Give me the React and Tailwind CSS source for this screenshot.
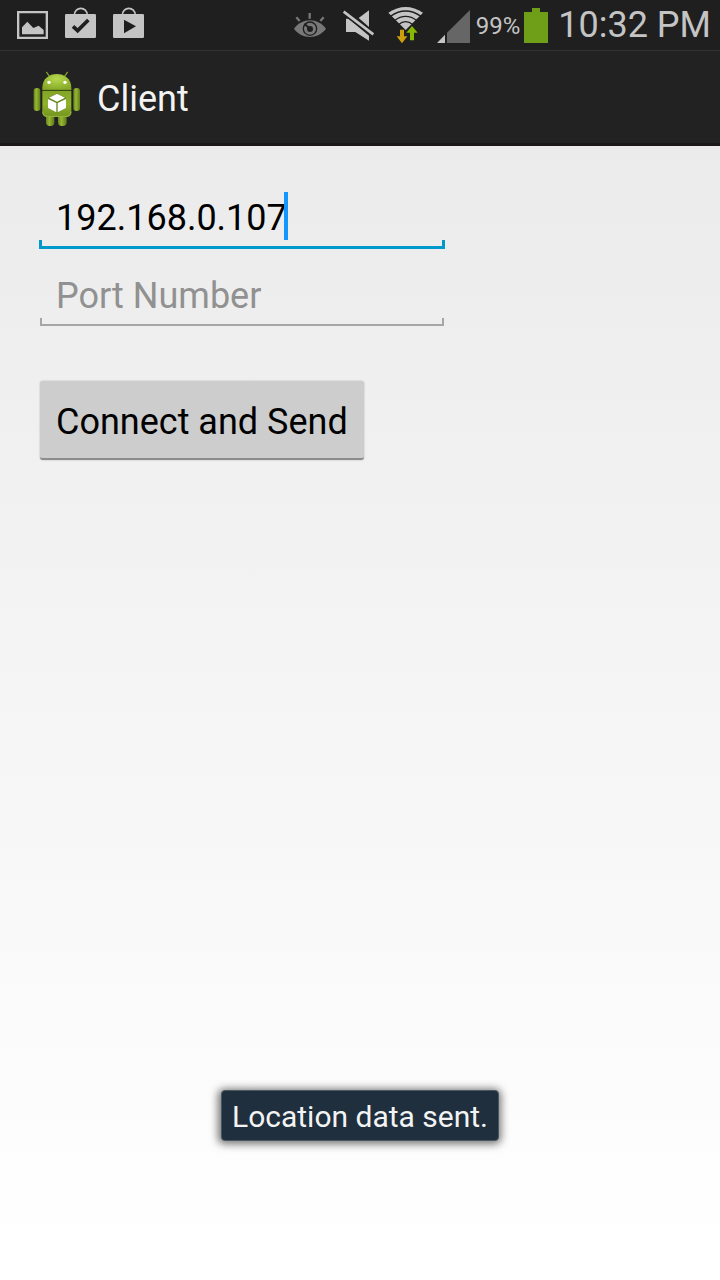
import React, { useState } from "react";

function StatusIcon({ viewBox, width = "w-12", label, children }) {
  return (
    <svg viewBox={viewBox} className={`${width} h-[50px] shrink-0`} role="img" aria-label={label}>
      {children}
    </svg>
  );
}

function StatusBar() {
  return (
    <div className="flex h-[51px] items-start justify-between border-b border-[#323232] bg-[#1f1f1f] pl-2 pr-[9px] text-[#c4c4c4]">
      <div className="flex">
        <StatusIcon viewBox="24 0 144 150" label="Screenshot saved">
          <path d="M51 33H144V117H51ZM58 40V110H137V40Z" fill="#c4c4c4" fillRule="evenodd" />
          <path d="M66 103V82L82 65L100 84L116 77L131 90V103Z" fill="#c4c4c4" />
        </StatusIcon>
        <StatusIcon viewBox="168 0 144 150" label="App updated">
          <path d="M223 46C223 18 262 18 262 46" fill="none" stroke="#c4c4c4" strokeWidth="5" />
          <rect x="195" y="42" width="93" height="72" rx="4" fill="#c4c4c4" />
          <path d="M219 79L233 92L265 60" fill="none" stroke="#1f1f1f" strokeWidth="11" />
        </StatusIcon>
        <StatusIcon viewBox="312 0 144 150" label="Play Store">
          <path d="M367 46C367 18 406 18 406 46" fill="none" stroke="#c4c4c4" strokeWidth="5" />
          <rect x="339" y="42" width="93" height="72" rx="4" fill="#c4c4c4" />
          <path d="M372 59L408 79L372 100Z" fill="#1f1f1f" />
        </StatusIcon>
      </div>
      <div className="flex items-center">
        <StatusIcon viewBox="3 0 144 150" label="Smart stay">
          <path d="M27 86C50 52 99 52 123 86C99 119 50 119 27 86Z" fill="#787878" />
          <circle cx="75" cy="86" r="20" fill="none" stroke="#1f1f1f" strokeWidth="4" />
          <circle cx="75" cy="87" r="9" fill="#1f1f1f" />
          <path d="M58 71L75 86" stroke="#1f1f1f" strokeWidth="6" />
          <path d="M34 52L44 63M74 39V56M116 52L106 63" stroke="#787878" strokeWidth="7" />
        </StatusIcon>
        <StatusIcon viewBox="147 0 144 150" label="Sound off">
          <path d="M183 56H191L252 107V122L211 96H183Z" fill="#c4c4c4" />
          <path d="M252 31V81L221 54Z" fill="#c4c4c4" />
          <path d="M176 35L265 103" stroke="#1f1f1f" strokeWidth="17" />
          <path d="M176 35L265 103" stroke="#c4c4c4" strokeWidth="8" />
        </StatusIcon>
        <StatusIcon viewBox="291 0 144 150" label="Wi-Fi">
          <path d="M362 90L310 38Q362 4 414 38Z" fill="#c4c4c4" />
          <path d="M316 49Q362 17 408 49M328 62Q362 36 396 62M340 74Q362 56 384 74" fill="none" stroke="#1f1f1f" strokeWidth="4" />
          <path d="M345 89H357V109H367L351 130L335 109H345Z" fill="#cc9f0c" />
          <path d="M364 98L381 76L398 98L390 101V123H373V101Z" fill="#1f1f1f" />
          <path d="M375 121H387V98H398L381 78L364 98H375Z" fill="#86b900" />
        </StatusIcon>
        <StatusIcon viewBox="15 0 120 150" width="w-10" label="Signal strength">
          <path d="M135 30V129H66V98Z" fill="#666666" />
          <path d="M60 104V129H36Z" fill="#c4c4c4" />
        </StatusIcon>
        <span className="pl-1.5 pr-1 pt-0.5 text-[24px] leading-[48px]">99%</span>
        <StatusIcon viewBox="297 0 72 150" width="w-6" label="Battery">
          <path d="M321 24H345V36H369V129H297V36H321Z" fill="#6f9e18" />
        </StatusIcon>
        <time className="pl-2.5 text-[36px] leading-[50px]">10:32 PM</time>
      </div>
    </div>
  );
}

function AndroidLogo() {
  return (
    <svg viewBox="39 30 144 168" className="h-14 w-12 shrink-0" aria-hidden="true">
      <defs>
        <linearGradient id="bodyGreen" x1="0" y1="0" x2="0" y2="1">
          <stop offset="0" stopColor="#82a527" />
          <stop offset="0.5" stopColor="#8fb32b" />
          <stop offset="1" stopColor="#72931f" />
        </linearGradient>
        <linearGradient id="limbGreen" x1="0" y1="0" x2="1" y2="0">
          <stop offset="0" stopColor="#67851c" />
          <stop offset="0.4" stopColor="#96b733" />
          <stop offset="1" stopColor="#5d7a18" />
        </linearGradient>
        <radialGradient id="headGreen" cx="0.5" cy="0.3" r="0.7">
          <stop offset="0" stopColor="#b5d84e" />
          <stop offset="1" stopColor="#86aa27" />
        </radialGradient>
      </defs>
      <path d="M80 34L91 50M142 34L131 50" stroke="#7f9f2a" strokeWidth="4" strokeLinecap="round" />
      <rect x="78" y="145" width="25" height="50" rx="11" fill="url(#limbGreen)" />
      <rect x="114" y="145" width="26" height="50" rx="11" fill="url(#limbGreen)" />
      <rect x="41" y="81" width="20" height="69" rx="9" fill="url(#limbGreen)" />
      <rect x="160" y="81" width="20" height="69" rx="9" fill="url(#limbGreen)" />
      <path d="M67 90H154V154Q154 168 140 168H81Q67 168 67 154Z" fill="url(#bodyGreen)" />
      <path d="M68 152Q68 166 82 166H139Q153 166 153 152" fill="none" stroke="#a9c94c" strokeWidth="2" />
      <path d="M67 87V80C67 25 154 25 154 80V87Z" fill="url(#headGreen)" />
      <path d="M67 88H154" stroke="#3f5510" strokeWidth="3" />
      <circle cx="87" cy="64" r="5" fill="#ffffff" />
      <circle cx="135" cy="64" r="5" fill="#ffffff" />
      <path d="M111 97L138 110V141L111 156L84 141V110Z" fill="#66851c" />
      <path d="M111 98L135 110L111 122L87 110Z" fill="#ffffff" />
      <path d="M84 114L109 126V154L84 141Z" fill="#ffffff" />
      <path d="M138 114L113 126V154L138 141Z" fill="#ffffff" />
    </svg>
  );
}

export default function App() {
  const [address, setAddress] = useState("192.168.0.107");
  const [port, setPort] = useState("");

  return (
    <div className="relative flex min-h-screen flex-col font-[Roboto,sans-serif]">
      <StatusBar />
      <header className="flex h-[95px] items-center gap-4 border-b-3 border-[#1b1717] bg-[#222222] pl-[33px] pt-1">
        <AndroidLogo />
        <h1 className="text-[36px] leading-[48px] text-[#f3f3f3]">Client</h1>
      </header>

      <main className="flex-1 bg-linear-to-b from-[#ebebeb] to-white to-97% px-10 pt-[25px]">
        <form onSubmit={(e) => e.preventDefault()}>
          <div className="relative w-[404px] max-w-full">
            <input
              type="text"
              aria-label="IP address"
              value={address}
              onChange={(e) => setAddress(e.target.value)}
              className="block h-[78px] w-full bg-transparent px-4 pt-4 text-[36px] text-black caret-transparent outline-none"
            />
            <span className="pointer-events-none absolute left-[244px] top-[21px] h-12 w-1 bg-[#1397ff]" />
            <span className="pointer-events-none absolute -inset-x-px bottom-0 h-[9px] border-x-3 border-b-3 border-[#0099cc]" />
          </div>
          <div className="relative w-[404px] max-w-full">
            <input
              type="text"
              aria-label="Port Number"
              placeholder="Port Number"
              value={port}
              onChange={(e) => setPort(e.target.value)}
              className="block h-[78px] w-full bg-transparent px-4 pt-4 text-[36px] text-black outline-none placeholder:text-[#919191]"
            />
            <span className="pointer-events-none absolute inset-x-0 bottom-px h-2 border-x-2 border-b-2 border-[#a6a6a6]" />
          </div>
          <button
            type="submit"
            className="mt-[54px] h-[79px] rounded-[3px] border-b-2 border-[#8c8c8c] bg-[#cdcdcd] px-4 pt-1 text-[36px] text-black shadow-[0_0_2px_rgba(0,0,0,0.25)]"
          >
            Connect and Send
          </button>
        </form>
      </main>

      <div
        role="status"
        className="absolute bottom-[139px] left-1/2 -translate-x-1/2 whitespace-nowrap rounded-[4px] border border-[#4a5862] bg-[#1f2f3d] px-2.5 pt-0.5 text-[30px] leading-[47px] text-[#f3f3f3] shadow-[0_1px_8px_2px_rgba(0,0,0,0.55)]"
      >
        Location data sent.
      </div>
    </div>
  );
}
